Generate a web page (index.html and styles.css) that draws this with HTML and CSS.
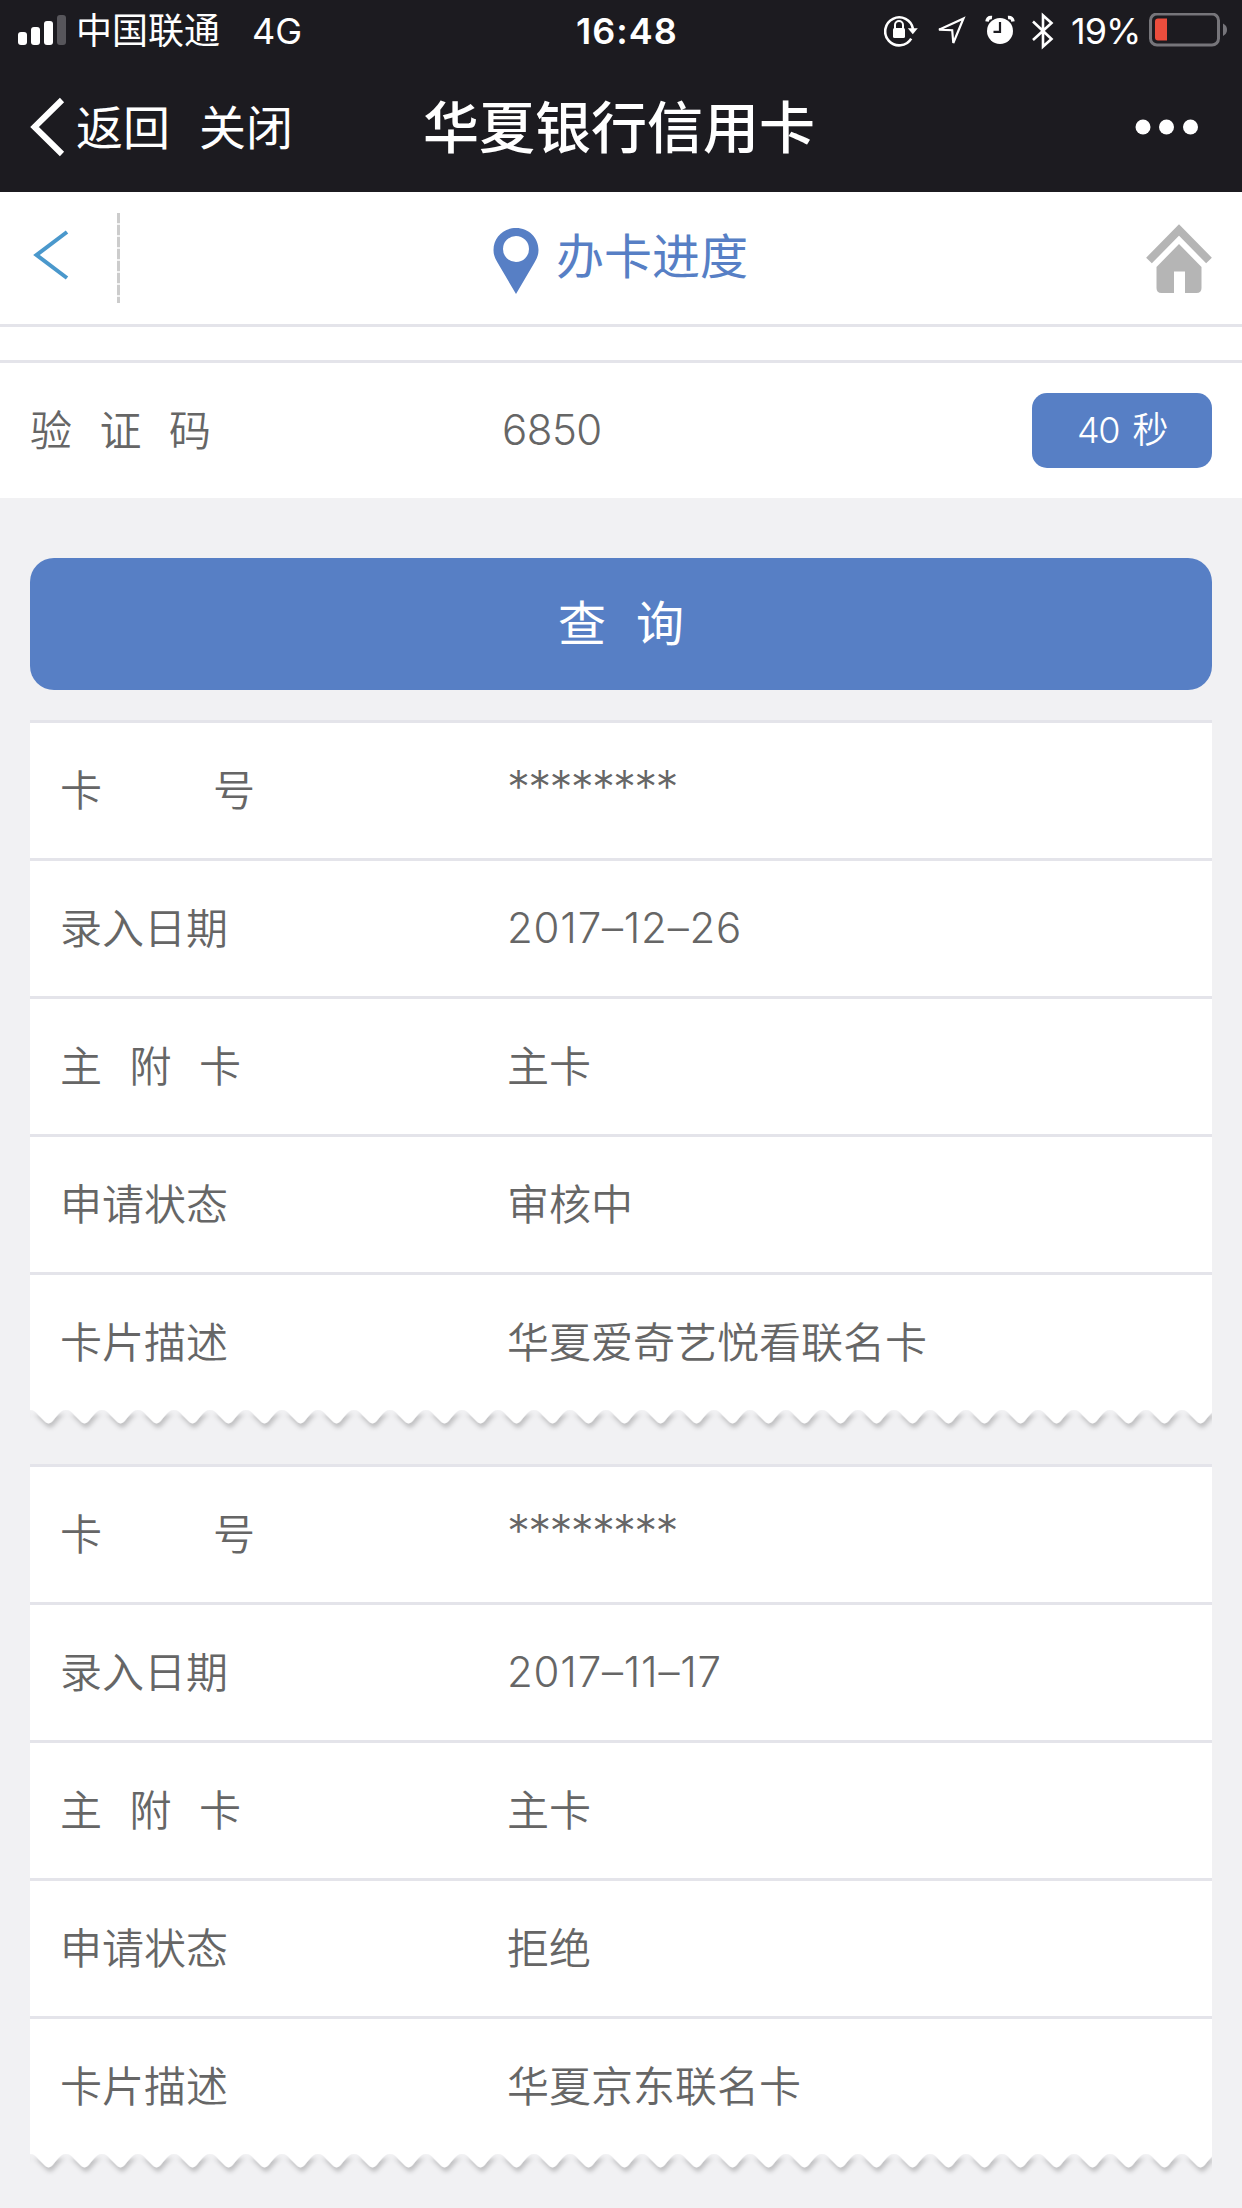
FILE: index.html
```
<!DOCTYPE html>
<html lang="zh-CN">

<head>
    <meta charset="UTF-8">
    <meta name="viewport" content="width=device-width, initial-scale=1.0">
    <title>华夏银行信用卡</title>
    <link rel="stylesheet" href="styles.css">
</head>

<body>
    <div class="top">
        <div class="status">
            <svg class="signal" width="50" height="32" viewBox="0 0 50 32">
                <rect x="0" y="17" width="9" height="13" rx="3" fill="#fff" />
                <rect x="13" y="12" width="9" height="18" rx="3" fill="#fff" />
                <rect x="26" y="6" width="9" height="24" rx="3" fill="#fff" />
                <rect x="39" y="0" width="9" height="30" rx="3" fill="#57565b" />
            </svg>
            <span class="carrier">中国联通</span>
            <span class="network">4G</span>
            <span class="time">16:48</span>
            <div class="status-right">
                <svg width="36" height="40" viewBox="0 0 36 40">
                    <path d="M27.2 27.6A14 14 0 1 1 29 18" fill="none" stroke="#fff" stroke-width="2.6" />
                    <path d="M23.8 17.3h10l-5 6z" fill="#fff" />
                    <rect x="9" y="17" width="12" height="10" rx="1.5" fill="#fff" />
                    <path d="M11 18v-4a4 4 0 0 1 8 0v4" fill="none" stroke="#fff" stroke-width="2" />
                </svg>
                <svg class="gps" width="32" height="40" viewBox="0 0 32 40">
                    <path d="M27.5 7.500L3 18.700l13.200.5L17.300 32z" fill="none" stroke="#fff" stroke-width="2.2" />
                </svg>
                <svg class="alarm" width="30" height="40" viewBox="0 0 30 40">
                    <circle cx="15" cy="20" r="13" fill="#fff" />
                    <path d="M2 10.500Q2.500 6 7 6.500M23 6.500q4.500-.5 5 4" fill="none" stroke="#fff" stroke-width="3.500" />
                    <path d="M15 11v9.800H8.500" fill="none" stroke="#1c1b20" stroke-width="2.200" />
                </svg>
                <svg class="bluetooth" width="23" height="40" viewBox="0 0 23 40">
                    <path d="M1 10.500l18.500 17.500L11 35.500v-31L19.500 12 1 29" fill="none" stroke="#fff" stroke-width="2.600" />
                </svg>
                <span class="percent">19%</span>
                <svg class="battery" width="80" height="36" viewBox="0 0 80 36">
                    <rect x="1.500" y="1" width="68" height="31" rx="6.500" fill="none" stroke="#76757a" stroke-width="3" />
                    <path d="M9 5.500h9v22H9q-3 0-3-3v-16q0-3 3-3z" fill="#eb4d3d" />
                    <path d="M74 10.500q4 2 4 6.200t-4 6.200z" fill="#76757a" />
                </svg>
            </div>
        </div>

        <div class="nav">
            <svg class="nav-arrow" width="36" height="60" viewBox="0 0 36 60">
                <path d="M32 3L4.500 30 32 57" fill="none" stroke="#fff" stroke-width="6" />
            </svg>
            <span class="nav-back">返回</span>
            <span class="nav-close">关闭</span>
            <h1 class="nav-title">华夏银行信用卡</h1>
            <svg class="nav-more" width="64" height="16" viewBox="0 0 64 16">
                <circle cx="8" cy="8" r="7.500" fill="#fff" />
                <circle cx="31.500" cy="8" r="7.500" fill="#fff" />
                <circle cx="55.500" cy="8" r="7.500" fill="#fff" />
            </svg>
        </div>
    </div>

    <div class="header">
        <svg class="header-back" width="36" height="52" viewBox="0 0 36 52">
            <path d="M34 3L3.500 26l30.500 23" fill="none" stroke="#4a98cc" stroke-width="4" />
        </svg>
        <div class="header-line"></div>
        <svg class="pin" width="46" height="66" viewBox="0 0 46 66">
            <path fill-rule="evenodd" fill="#577fc5" d="M23 0C10 0 .5 10 .5 22c0 5 1.500 8 4 12.500L23 66l18.500-31.500c2.500-4.500 4-7.500 4-12.500C45.500 10 36 0 23 0zM23 8a13 13 0 1 1 0 26 13 13 0 0 1 0-26z" />
        </svg>
        <h2 class="header-title">办卡进度</h2>
        <svg class="home" width="66" height="70" viewBox="0 0 66 70">
            <path d="M3 36.500L33 6l30 30.500" fill="none" stroke="#b5b5b5" stroke-width="8" />
            <path d="M33 20l22.500 23v21q0 5-5 5H39V47.500H28V69H15.500q-5 0-5-5V43z" fill="#b5b5b5" />
        </svg>
    </div>

    <div class="strip"></div>

    <div class="verify">
        <span class="label three">验证码</span>
        <span class="code">6850</span>
        <button class="timer">40 秒</button>
    </div>

    <button class="search">查询</button>

    <div class="card">
        <div class="row"><span class="label two">卡号</span><span class="value stars">********</span></div>
        <div class="row"><span class="label">录入日期</span><span class="value num">2017–12–26</span></div>
        <div class="row"><span class="label three">主附卡</span><span class="value">主卡</span></div>
        <div class="row"><span class="label">申请状态</span><span class="value">审核中</span></div>
        <div class="row"><span class="label">卡片描述</span><span class="value">华夏爱奇艺悦看联名卡</span></div>
        <svg class="wave" width="1182" height="24" viewBox="0 0 1182 24">
            <defs>
                <pattern id="teeth" width="36" height="24" patternUnits="userSpaceOnUse">
                    <path d="M0-1H36V0C32 0 30 2 27.500 5L22.500 11Q18.500 15.500 14.500 11L8.500 5C6 2 4 0 0 0z" fill="#fff" />
                </pattern>
                <filter id="shade" x="0" y="0" width="1182" height="24" filterUnits="userSpaceOnUse">
                    <feDropShadow dx="1.500" dy="4.500" stdDeviation="2" flood-color="#000" flood-opacity=".2" />
                </filter>
            </defs>
            <rect x="-36" width="1254" height="24" fill="url(#teeth)" filter="url(#shade)" />
        </svg>
    </div>

    <div class="card">
        <div class="row"><span class="label two">卡号</span><span class="value stars">********</span></div>
        <div class="row"><span class="label">录入日期</span><span class="value num">2017–11–17</span></div>
        <div class="row"><span class="label three">主附卡</span><span class="value">主卡</span></div>
        <div class="row"><span class="label">申请状态</span><span class="value">拒绝</span></div>
        <div class="row"><span class="label">卡片描述</span><span class="value">华夏京东联名卡</span></div>
        <svg class="wave" width="1182" height="24" viewBox="0 0 1182 24">
            <rect x="-36" width="1254" height="24" fill="url(#teeth)" filter="url(#shade)" />
        </svg>
    </div>
</body>

</html>
```
FILE: styles.css
```
* {
    box-sizing: border-box;
}

body {
    margin: 0;
    height: 2208px;
    overflow: hidden;
    background-color: #f1f1f3;
    color: #666;
    font-family: Inter, "Noto Sans CJK SC", sans-serif;
    font-size: 42px;
}

svg {
    display: block;
    flex-shrink: 0;
}

h1,
h2 {
    margin: 0;
}

button {
    display: block;
    padding: 0;
    border: none;
    background-color: #577fc5;
    color: #fff;
    font-family: inherit;
}

.top {
    height: 192px;
    background-color: #1c1b20;
    color: #fff;
}

/* status bar */
.status {
    display: flex;
    align-items: center;
    height: 61px;
    padding: 1px 13px 0 18px;
    font-size: 36px;
    line-height: 60px;
    white-space: nowrap;
}

.carrier {
    width: 176px;
    margin-left: 8px;
}

.network {
    width: 324px;
}

.time {
    font-weight: 600;
    letter-spacing: 1px;
}

.status-right {
    display: flex;
    align-items: center;
    margin-left: auto;
}

.gps {
    margin-left: 16px;
}

.alarm {
    margin-left: 17px;
}

.bluetooth {
    margin-left: 17px;
}

.percent {
    width: 78px;
    margin-left: 16px;
    letter-spacing: -1px;
}

/* navigation */
.nav {
    display: flex;
    align-items: center;
    height: 131px;
    padding: 0 43px 0 30px;
    font-size: 47px;
    line-height: 131px;
    white-space: nowrap;
}

.nav-back {
    width: 123px;
    margin-left: 10px;
    padding-top: 2px;
}

.nav-close {
    width: 224px;
    padding-top: 2px;
}

.nav-title {
    padding-top: 3px;
    font-size: 56px;
    font-weight: 500;
}

.nav-more {
    margin-left: auto;
}

/* page header */
.header {
    display: flex;
    align-items: center;
    height: 135px;
    padding: 0 30px 0 33px;
    border-bottom: 3px solid #e4e4ea;
    background-color: #fff;
}

.header-back {
    margin-bottom: 6px;
}

.header-line {
    width: 3px;
    height: 90px;
    margin-left: 48px;
    background: repeating-linear-gradient(#ccc 0 10px, #f2f2f2 10px 12px);
}

.pin {
    margin-top: 5px;
    margin-left: 373px;
}

.header-title {
    margin-left: 17px;
    padding-bottom: 2px;
    color: #577fc5;
    font-size: 48px;
    font-weight: 400;
    line-height: 130px;
}

.home {
    margin-top: 2px;
    margin-left: auto;
}

.strip {
    height: 36px;
    border-bottom: 3px solid #e4e4ea;
    background-color: #fff;
}

.verify {
    display: flex;
    align-items: center;
    height: 135px;
    padding: 0 30px;
    background-color: #fff;
}

.label,
.value {
    padding-bottom: 7px;
    font-weight: 350;
}

.label {
    width: 447px;
}

/* short labels are stretched to line up with the four-character ones */
.three {
    letter-spacing: 27.5px;
}

.two {
    letter-spacing: 111px;
}

.verify .label {
    width: 472px;
}

.code {
    padding-bottom: 3px;
    font-weight: 300;
    letter-spacing: -0.5px;
}

.num {
    padding-bottom: 3px;
    font-weight: 300;
    letter-spacing: 0.8px;
}

.stars {
    padding-bottom: 7px;
    font-size: 46px;
    font-weight: 300;
    letter-spacing: -1.800px;
}

.timer {
    width: 180px;
    height: 75px;
    margin-left: auto;
    padding-bottom: 8px;
    border-radius: 15px;
    font-size: 36px;
    font-weight: 350;
    letter-spacing: -1.500px;
    word-spacing: 5px;
}

.search {
    width: 1182px;
    height: 132px;
    margin: 60px 30px 30px;
    padding-bottom: 8px;
    border-radius: 24px;
    font-size: 48px;
    letter-spacing: 30px;
    text-indent: 30px;
}

/* result cards */
.card {
    margin: 0 30px 30px;
}

.row {
    display: flex;
    align-items: center;
    height: 138px;
    padding-left: 30px;
    border-top: 3px solid #e4e4ea;
    background-color: #fff;
}
```
